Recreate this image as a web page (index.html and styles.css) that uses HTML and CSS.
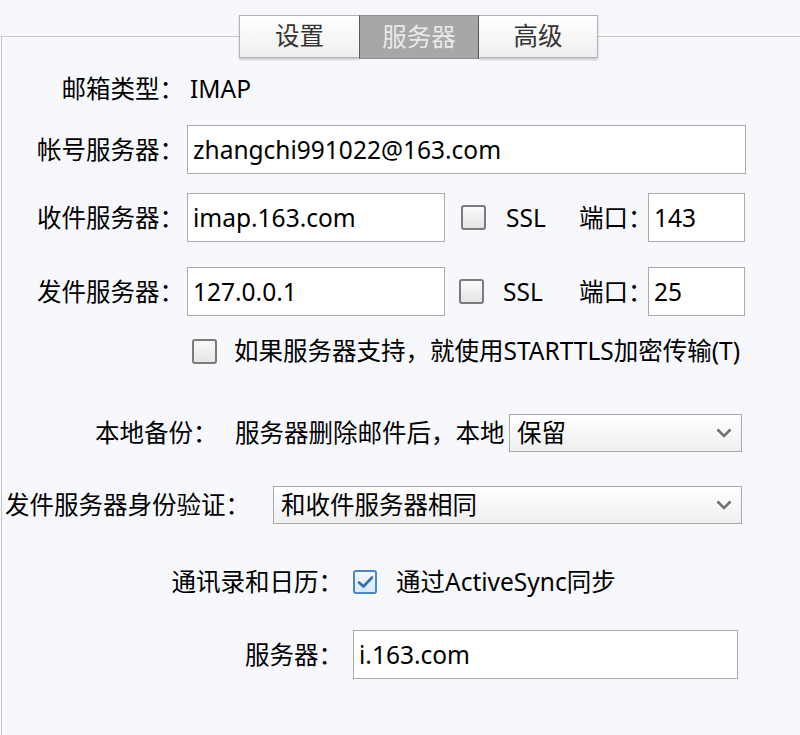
FILE: index.html
```html
<!DOCTYPE html>
<html lang="zh-CN">
<head>
<meta charset="utf-8">
<title>服务器</title>
<link rel="stylesheet" href="styles.css">
</head>
<body>
<div class="tabs">
  <div class="tab">设置</div>
  <div class="tab active">服务器</div>
  <div class="tab">高级</div>
</div>
<div class="panel">
  <div class="row r1">
    <span class="lbl">邮箱类型：</span>
    <span class="val">IMAP</span>
  </div>
  <div class="row r2">
    <span class="lbl">帐号服务器：</span>
    <div class="field w-full">zhangchi991022@163.com</div>
  </div>
  <div class="row r3">
    <span class="lbl">收件服务器：</span>
    <div class="field w-host">imap.163.com</div>
    <span class="cb cb-a"></span>
    <span class="ssl ssl-a">SSL</span>
    <span class="port-lbl">端口：</span>
    <div class="field w-port">143</div>
  </div>
  <div class="row r4">
    <span class="lbl">发件服务器：</span>
    <div class="field w-host">127.0.0.1</div>
    <span class="cb cb-b"></span>
    <span class="ssl ssl-b">SSL</span>
    <span class="port-lbl">端口：</span>
    <div class="field w-port">25</div>
  </div>
  <div class="row r5">
    <span class="cb cb-tls"></span>
    <span class="tls-text">如果服务器支持，就使用STARTTLS加密传输(T)</span>
  </div>
  <div class="row r6">
    <span class="lbl-backup">本地备份：</span>
    <span class="backup-text">服务器删除邮件后，本地</span>
    <div class="select sel-keep"><span>保留</span><svg class="chev" width="16" height="10" viewBox="0 0 16 10"><polyline points="1.5,1.5 8,8 14.5,1.5" fill="none" stroke="#727272" stroke-width="2.6"/></svg></div>
  </div>
  <div class="row r7">
    <span class="lbl-auth">发件服务器身份验证：</span>
    <div class="select sel-auth"><span>和收件服务器相同</span><svg class="chev" width="16" height="10" viewBox="0 0 16 10"><polyline points="1.5,1.5 8,8 14.5,1.5" fill="none" stroke="#727272" stroke-width="2.6"/></svg></div>
  </div>
  <div class="row r8">
    <span class="lbl2">通讯录和日历：</span>
    <span class="cb checked"><svg width="17" height="14" viewBox="0 0 17 14"><polyline points="2,7.5 6.5,11.5 15,2.5" fill="none" stroke="#2f6db4" stroke-width="2.6" stroke-linecap="round" stroke-linejoin="round"/></svg></span>
    <span class="sync-text">通过ActiveSync同步</span>
  </div>
  <div class="row r9">
    <span class="lbl2">服务器：</span>
    <div class="field w-as">i.163.com</div>
  </div>
</div>
</body>
</html>
```
FILE: styles.css
```css
* { box-sizing: border-box; }
html, body { margin: 0; padding: 0; }
body {
  width: 800px;
  height: 735px;
  overflow: hidden;
  background: #f7f8fc;
  font-family: "Noto Sans", "Noto Sans CJK SC", sans-serif;
  font-size: 24.5px;
  color: #000;
}

.tabs {
  display: flex;
  margin-left: 239px;
  padding-top: 15px;
  margin-bottom: -23px;
  position: relative;
  z-index: 1;
  width: 360px;
}
.tab {
  width: 120px;
  height: 43px;
  display: flex;
  align-items: center;
  justify-content: center;
  border: 1px solid #b3b3b3;
  border-right: none;
  background: linear-gradient(#ffffff, #efefef);
  color: #333;
  line-height: 1;
  box-shadow: 0 2px 2px rgba(0,0,0,0.18);
}
.tab:last-child { border-right: 1px solid #b3b3b3; width: 119px; }
.tab.active {
  background: #a7a7a7;
  color: #e9e9e9;
  border-color: #8e8e8e;
  border-left: 1px solid #5a5a5a;
  border-right: 1px solid #5a5a5a;
  height: 44px;
  box-shadow: none;
}
.tab.active + .tab { border-left: none; }

.panel {
  margin-left: 1px;
  height: 700px;
  border-top: 1px solid #c7c7c7;
  border-left: 1px solid #c7c7c7;
  display: flex;
  flex-direction: column;
}

.row {
  display: flex;
  align-items: center;
  white-space: nowrap;
  line-height: 1.2;
}
.r1 { margin-top: 32px; height: 40px; }
.r2 { margin-top: 16px; height: 49px; }
.r3 { margin-top: 19px; height: 49px; }
.r4 { margin-top: 25px; height: 49px; }
.r5 { margin-top: 20px; height: 30px; }
.r6 { margin-top: 48px; height: 38px; }
.r7 { margin-top: 34px; height: 38px; }
.r8 { margin-top: 43px; height: 30px; }
.r9 { margin-top: 33px; height: 49px; }

.lbl {
  width: 182px;
  text-align: right;
  flex: none;
}
.val { margin-left: 6px; }

.field {
  height: 49px;
  background: #fff;
  border: 1px solid #ababab;
  display: flex;
  align-items: center;
  padding-left: 5px;
  flex: none;
}
.w-full { margin-left: 3px; width: 559px; }
.w-host { margin-left: 3px; width: 258px; }
.w-port { width: 97px; }
.w-as { margin-left: 10px; width: 385px; }

.cb {
  width: 25px;
  height: 25px;
  border: 2px solid #7b7b7b;
  border-radius: 3px;
  background: linear-gradient(#fbfbfb, #e4e4e4);
  flex: none;
  display: flex;
  align-items: center;
  justify-content: center;
}
.cb.checked {
  width: 24px;
  height: 24px;
  border: 2px solid #4a88c8;
  background: linear-gradient(#f4f8fe, #dbe8f8);
  margin-left: 10px;
}
.cb-a { margin-left: 16px; }
.cb-b { margin-left: 14px; }
.cb-tls { margin-left: 190px; }

.ssl { flex: none; }
.ssl-a { margin-left: 20px; width: 73px; }
.ssl-b { margin-left: 19px; width: 76px; }
.port-lbl { width: 69px; flex: none; overflow: visible; }

.tls-text { margin-left: 17px; }

.lbl-backup { margin-left: 93px; width: 140px; flex: none; }
.backup-text { width: 274px; flex: none; }
.select {
  height: 38px;
  border: 1px solid #a9a9a9;
  background: linear-gradient(#ffffff, #efefef);
  display: flex;
  align-items: center;
  justify-content: space-between;
  padding: 0 9px 0 7px;
  flex: none;
}
.sel-keep { width: 233px; }
.sel-auth { width: 469px; }
.chev { flex: none; }

.lbl-auth { margin-left: 3px; width: 268px; flex: none; }

.lbl2 { width: 341px; text-align: right; flex: none; }
.sync-text { margin-left: 19px; }
```
